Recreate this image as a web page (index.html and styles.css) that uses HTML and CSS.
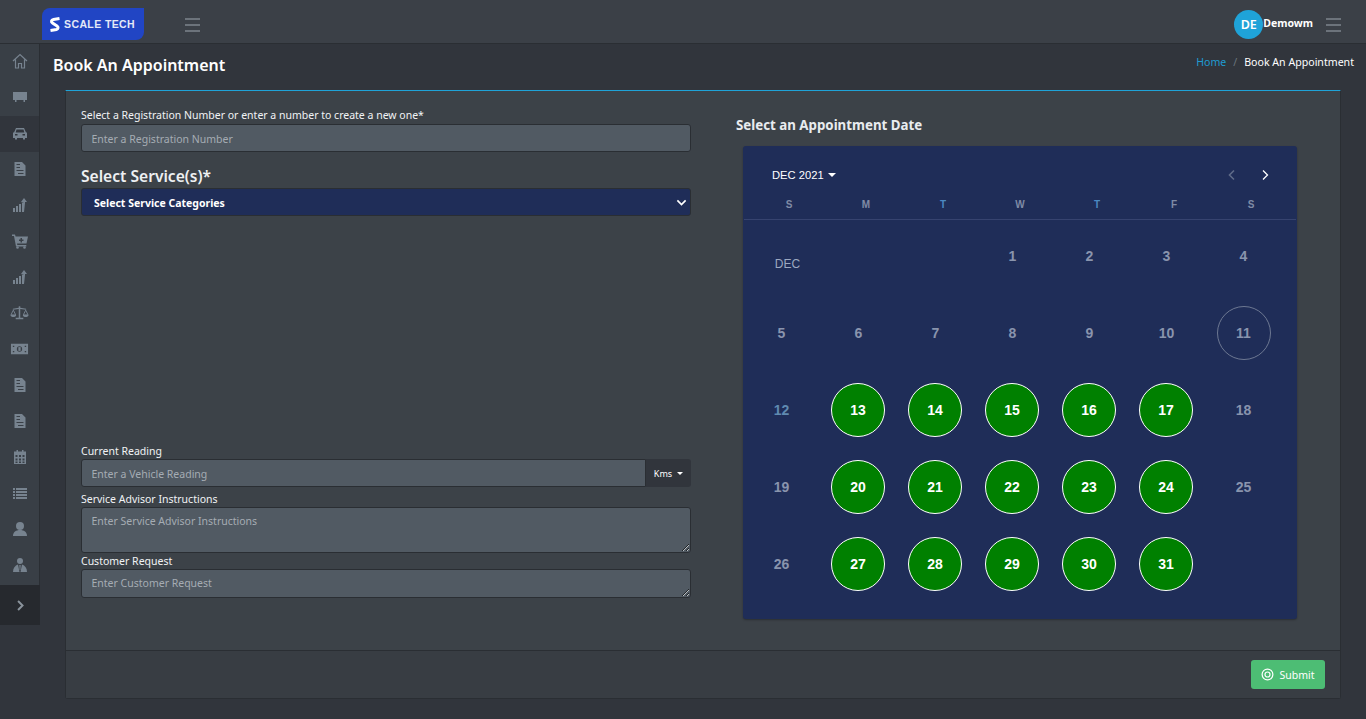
FILE: index.html
```html
<!DOCTYPE html>
<html>
<head>
    <title>Book An Appointment</title>
    <link rel="stylesheet" href="styles.css">
</head>
<body>
    <header class="topbar">
        <div class="logo">
            <svg class="logoMark" viewBox="0 0 12 16" width="12" height="17"><path d="M10.500 2 4.500 3C2 3.500 2 5.500 3.500 6.500L8 9.500C9.500 10.500 9.500 12.500 7.500 13L1.500 14" fill="none" stroke="#fff" stroke-width="3"/></svg>
            <span class="logoText">SCALE TECH</span>
        </div>
        <div class="burger"><span></span><span></span><span></span></div>
        <div class="topRight">
            <div class="avatar">DE</div>
            <span class="userName">Demowm</span>
            <div class="burger"><span></span><span></span><span></span></div>
        </div>
    </header>

    <div class="layout">
        <nav class="sidebar">
            <a class="navItem"><svg viewBox="0 0 16 16"><path d="M1 8 8 1.500 15 8M3.500 6.500V15h3v-4.500h3V15h3V6.500" fill="none" stroke="currentColor" stroke-width="1.200"/></svg></a>
            <a class="navItem"><svg viewBox="0 0 16 16"><path d="M1 3h14v8H1zM3 11h1.500v2H3zM11.500 11H13v2h-1.500z" fill="currentColor"/></svg></a>
            <a class="navItem active"><svg viewBox="0 0 16 16"><path d="M4 3h8l2 4.500h1V13h-2v1.500h-2V13H5v1.500H3V13H1V7.500h1zM4.500 4.500 3.700 7.500h8.600l-.8-3zM3 9v1.500h2.500V9zM10.500 9v1.500H13V9z" fill="currentColor" fill-rule="evenodd"/></svg></a>
            <a class="navItem"><svg viewBox="0 0 16 16"><path d="M2.500 1H10l3.500 3.500V15h-11zM4.500 3v1H8V3zM4.500 6v1H8V6zM4.500 9v1h7V9zM6 12v1h5.500v-1z" fill="currentColor" fill-rule="evenodd"/></svg></a>
            <a class="navItem"><svg viewBox="0 0 16 16"><path d="M1 11h2v4H1zM4 9h2v6H4zM7 7h2v8H7zM10 6h2v9h-2z" fill="currentColor"/><path d="M13 15V5h2L12 1 9 5l3 1z" fill="currentColor"/></svg></a>
            <a class="navItem"><svg viewBox="0 0 16 16"><path d="M0 1.500h3l.6 2H16l-1.500 7H5l.3 1.500h9v1.500H4L2 3H0zM8.500 5v1.500H7V8h1.500v1.500H10V8h1.500V6.500H10V5z" fill="currentColor" fill-rule="evenodd"/><circle cx="5.500" cy="14.500" r="1.300" fill="currentColor"/><circle cx="12.500" cy="14.500" r="1.300" fill="currentColor"/></svg></a>
            <a class="navItem"><svg viewBox="0 0 16 16"><path d="M1 11h2v4H1zM4 9h2v6H4zM7 7h2v8H7zM10 6h2v9h-2z" fill="currentColor"/><path d="M13 15V5h2L12 1 9 5l3 1z" fill="currentColor"/></svg></a>
            <a class="navItem wide"><svg viewBox="0 0 20 16"><path d="M9.200 1h1.600v1.500L17 3.500V4.500l-6.200-.8V13H14v1.500H6V13h3.200V3.700L3 4.500V3.500l6.200-1z" fill="currentColor"/><path d="M3.500 5 1 10h5zM16.500 5 14 10h5z" fill="none" stroke="currentColor"/><path d="M.5 10h6c0 3-6 3-6 0zM13.500 10h6c0 3-6 3-6 0z" fill="currentColor"/></svg></a>
            <a class="navItem wide"><svg viewBox="0 0 20 16"><path d="M1 2.500h18v11H1zM3 4.500v1.500h1.500V4.500zM15.500 4.500V6H17V4.500zM3 10v1.500h1.500V10zM15.500 10v1.500H17V10z" fill="currentColor" fill-rule="evenodd"/><circle cx="10" cy="8" r="2.800" fill="#393f46"/><rect x="8.800" y="6" width="2.400" height="4" fill="currentColor"/></svg></a>
            <a class="navItem"><svg viewBox="0 0 16 16"><path d="M2.500 1H10l3.500 3.500V15h-11zM4.500 3v1H8V3zM4.500 6v1H8V6zM4.500 9v1h7V9zM6 12v1h5.500v-1z" fill="currentColor" fill-rule="evenodd"/></svg></a>
            <a class="navItem"><svg viewBox="0 0 16 16"><path d="M2.500 1H10l3.500 3.500V15h-11zM4.500 3v1H8V3zM4.500 6v1H8V6zM4.500 9v1h7V9zM6 12v1h5.500v-1z" fill="currentColor" fill-rule="evenodd"/></svg></a>
            <a class="navItem"><svg viewBox="0 0 16 16"><path d="M2 2.500h2.500V1h1.500v1.500h4V1h1.500v1.500H14V15H2zM3.500 6v2h2V6zM7 6v2h2V6zM10.500 6v2h2V6zM3.500 9.500v2h2v-2zM7 9.500v2h2v-2zM10.500 9.500v2h2v-2zM3.500 12.500v1.500h2v-1.500zM7 12.500v1.500h2v-1.500zM10.500 12.500v1.500h2v-1.500z" fill="currentColor" fill-rule="evenodd"/></svg></a>
            <a class="navItem"><svg viewBox="0 0 16 16"><path d="M1 3h2v2H1zM4 3h11v2H4zM1 6h2v2H1zM4 6h11v2H4zM1 9h2v2H1zM4 9h11v2H4zM1 12h2v2H1zM4 12h11v2H4z" fill="currentColor"/></svg></a>
            <a class="navItem"><svg viewBox="0 0 16 16"><circle cx="8" cy="5" r="4" fill="currentColor"/><path d="M1 15c0-4 3-6 7-6s7 2 7 6z" fill="currentColor"/></svg></a>
            <a class="navItem"><svg viewBox="0 0 16 16"><circle cx="8" cy="4" r="3" fill="currentColor"/><path d="M1 15c0-4 2-6.500 5-7.500L7.500 15zM15 15c0-4-2-6.500-5-7.500L8.500 15zM7.300 8h1.400L8.400 13h-.8z" fill="currentColor"/></svg></a>
            <a class="navItem toggle"><svg viewBox="0 0 16 16"><path d="M5 2.500 10.500 8 5 13.500" fill="none" stroke="currentColor" stroke-width="2.400"/></svg></a>
        </nav>

        <main class="content">
            <div class="pageHead">
                <h1>Book An Appointment</h1>
                <div class="breadcrumb">
                    <a>Home</a>
                    <span class="sep">/</span>
                    <span>Book An Appointment</span>
                </div>
            </div>

            <section class="card">
                <div class="cardBody">
                    <div class="formCol">
                        <label>Select a Registration Number or enter a number to create a new one*</label>
                        <input type="text" class="field" placeholder="Enter a Registration Number">

                        <h3 class="serviceTitle">Select Service(s)*</h3>
                        <div class="categorySelect">
                            <span>Select Service Categories</span>
                            <svg viewBox="0 0 16 16" width="11" height="11"><path d="M2 5l6 6 6-6" fill="none" stroke="#fff" stroke-width="2.400"/></svg>
                        </div>

                        <div class="lowerFields">
                            <label>Current Reading</label>
                            <div class="inputGroup">
                                <input type="text" class="field" placeholder="Enter a Vehicle Reading">
                                <div class="unit">Kms <i class="caret"></i></div>
                            </div>
                            <label>Service Advisor Instructions</label>
                            <textarea class="field tallArea" placeholder="Enter Service Advisor Instructions"></textarea>
                            <label>Customer Request</label>
                            <textarea class="field shortArea" placeholder="Enter Customer Request"></textarea>
                        </div>
                    </div>

                    <div class="dateCol">
                        <h4>Select an Appointment Date</h4>
                        <div class="calendar">
                            <div class="calHead">
                                <div class="calMonth">DEC 2021 <i class="caret"></i></div>
                                <div class="calArrows">
                                    <svg viewBox="0 0 12 12" width="12" height="12"><path d="M8 1.500 3.500 6 8 10.500" fill="none" stroke="#5f6b88" stroke-width="1.600"/></svg>
                                    <svg viewBox="0 0 12 12" width="12" height="12"><path d="M4 1.500 8.500 6 4 10.500" fill="none" stroke="#fff" stroke-width="1.300"/></svg>
                                </div>
                            </div>
                            <div class="weekdays">
                                <span>S</span><span>M</span><span class="blue">T</span><span>W</span><span class="blue">T</span><span>F</span><span>S</span>
                            </div>
                            <div class="days">
                                <div class="day monthLabel">DEC</div>
                                <div class="day"></div>
                                <div class="day"></div>
                                <div class="day">1</div>
                                <div class="day">2</div>
                                <div class="day">3</div>
                                <div class="day">4</div>

                                <div class="day">5</div>
                                <div class="day">6</div>
                                <div class="day">7</div>
                                <div class="day">8</div>
                                <div class="day">9</div>
                                <div class="day">10</div>
                                <div class="day"><b class="today">11</b></div>

                                <div class="day blueText">12</div>
                                <div class="day"><b class="open">13</b></div>
                                <div class="day"><b class="open">14</b></div>
                                <div class="day"><b class="open">15</b></div>
                                <div class="day"><b class="open">16</b></div>
                                <div class="day"><b class="open">17</b></div>
                                <div class="day">18</div>

                                <div class="day">19</div>
                                <div class="day"><b class="open">20</b></div>
                                <div class="day"><b class="open">21</b></div>
                                <div class="day"><b class="open">22</b></div>
                                <div class="day"><b class="open">23</b></div>
                                <div class="day"><b class="open">24</b></div>
                                <div class="day">25</div>

                                <div class="day">26</div>
                                <div class="day"><b class="open">27</b></div>
                                <div class="day"><b class="open">28</b></div>
                                <div class="day"><b class="open">29</b></div>
                                <div class="day"><b class="open">30</b></div>
                                <div class="day"><b class="open">31</b></div>
                            </div>
                        </div>
                    </div>
                </div>
                <div class="cardFooter">
                    <button class="submitBtn">
                        <svg viewBox="0 0 14 14" width="13" height="13"><circle cx="7" cy="7" r="5.800" fill="none" stroke="#fff" stroke-width="1.300"/><circle cx="7" cy="7" r="2.700" fill="none" stroke="#fff" stroke-width="1.300"/></svg>
                        Submit
                    </button>
                </div>
            </section>
        </main>
    </div>
</body>
</html>
```

FILE: styles.css
```css
* {
    box-sizing: border-box;
}

body {
    font-family: "Noto Sans", "Open Sans", sans-serif;
    background-color: #31353c;
    color: #fff;
    margin: 0;
    height: 719px;
    overflow: hidden;
}

.topbar {
    height: 44px;
    padding-top: 6px;
    display: flex;
    align-items: center;
    background-color: #3b4047;
    border-bottom: 1px solid #2a2e33;
}

.logo {
    width: 102px;
    height: 32px;
    margin-left: 42px;
    margin-bottom: 1px;
    background-color: #2145c4;
    border-radius: 8px 0 8px 0;
    display: flex;
    align-items: center;
    padding-left: 7px;
    gap: 3px;
}

.logoText {
    font-family: "Liberation Sans", sans-serif;
    font-size: 10.500px;
    font-weight: 700;
    letter-spacing: 0.4px;
    color: #e4e9f7;
    white-space: nowrap;
}

.burger {
    width: 15px;
    margin-left: 41px;
    display: flex;
    flex-direction: column;
    gap: 4px;
}

.burger span {
    height: 2px;
    background-color: #6c737b;
}

.topRight {
    margin-left: auto;
    display: flex;
    align-items: center;
    padding-right: 25px;
}

.topRight .burger {
    margin-left: 13px;
}

.avatar {
    width: 29px;
    height: 29px;
    border-radius: 50%;
    background-color: #1fa3d8;
    font-size: 12.500px;
    font-weight: 600;
    display: flex;
    align-items: center;
    justify-content: center;
}

.userName {
    font-size: 10.500px;
    font-weight: 700;
    margin-bottom: 3px;
}

.layout {
    display: flex;
    height: 675px;
}

.sidebar {
    width: 40px;
    height: 581px;
    flex-shrink: 0;
    background-color: #393f46;
    border-right: 1px solid #2a2e33;
    color: #77838f;
}

.navItem {
    height: 36px;
    padding-bottom: 2px;
    display: flex;
    align-items: center;
    justify-content: center;
}

.navItem svg {
    width: 16px;
    height: 16px;
}

.navItem.wide svg {
    width: 19px;
}

.navItem.active {
    background-color: #31353c;
}

.navItem.toggle {
    height: 40px;
    margin-top: 1px;
    margin-right: -1px;
    padding-bottom: 0;
    background-color: #26292e;
    color: #8a939c;
}

.navItem.toggle svg {
    width: 13px;
    height: 13px;
}

.content {
    flex: 1;
    padding: 0 25px 20px 25px;
    display: flex;
    flex-direction: column;
}

.pageHead {
    height: 46px;
    margin-left: -12px;
    margin-right: -13px;
    display: flex;
    justify-content: space-between;
    align-items: flex-start;
    padding-top: 9px;
}

.pageHead h1 {
    font-size: 16px;
    font-weight: 600;
    line-height: 24px;
    margin: 0;
}

.breadcrumb {
    font-size: 10.600px;
    line-height: 18px;
    display: flex;
    gap: 7px;
}

.breadcrumb a {
    color: #1f9bd1;
}

.sep {
    color: #6c757d;
}

.card {
    flex: 1;
    display: flex;
    flex-direction: column;
    background-color: #3c4248;
    border: 1px solid #2a2e33;
    border-top: 1px solid #1fa3d8;
    border-radius: 0 0 3px 3px;
}

.cardBody {
    flex: 1;
    display: flex;
    padding: 16px 15px 0 15px;
}

.formCol {
    width: 610px;
    display: flex;
    flex-direction: column;
}

.formCol label {
    display: block;
    font-size: 10.500px;
    line-height: 16px;
    color: #f1f3f5;
    height: 17px;
}

.formCol .lowerFields label {
    height: 16px;
}

.field {
    display: block;
    width: 100%;
    font-family: "Noto Sans", "Open Sans", sans-serif;
    font-size: 10.500px;
    color: #fff;
    background-color: #515a63;
    border: 1px solid #2a2e33;
    border-radius: 3px;
    padding: 1px 9.500px 0 9.500px;
    height: 28px;
    outline: none;
}

.field::placeholder {
    color: #a5acb3;
    opacity: 1;
}

textarea.field {
    padding-top: 6px;
}

.tallArea {
    height: 46px;
}

.shortArea {
    height: 29px;
}

.serviceTitle {
    font-size: 15.600px;
    font-weight: 600;
    line-height: 22px;
    margin: 13px 0 1px 0;
    color: #eef0f2;
}

.categorySelect {
    height: 28px;
    background-color: #1f2d58;
    border: 1px solid #2a2e33;
    border-radius: 3px;
    padding: 1px 3px 0 12px;
    font-size: 10.500px;
    font-weight: 700;
    display: flex;
    align-items: center;
    justify-content: space-between;
}

.lowerFields {
    margin-top: 227px;
}

.inputGroup {
    display: flex;
    height: 28px;
    margin-bottom: 4px;
}

.inputGroup .field {
    flex: 1;
    border-radius: 3px 0 0 3px;
}

.unit {
    width: 45px;
    background-color: #31353c;
    border-radius: 0 3px 3px 0;
    font-size: 9px;
    display: flex;
    align-items: center;
    justify-content: center;
    gap: 5px;
}

.caret {
    display: inline-block;
    border-top: 3px solid #fff;
    border-left: 3.500px solid transparent;
    border-right: 3.500px solid transparent;
}

.calMonth .caret {
    border-top-width: 4px;
    border-left-width: 4px;
    border-right-width: 4px;
}

.dateCol {
    margin-left: 45px;
    flex: 1;
}

.dateCol h4 {
    font-size: 13.300px;
    font-weight: 700;
    line-height: 18px;
    margin: 9px 0 12px 0;
    color: #e9ecef;
}

.calendar {
    width: 554px;
    height: 473px;
    margin-left: 7px;
    background-color: #1f2d58;
    border-radius: 3px;
    box-shadow: 0 1px 2px rgba(0, 0, 0, 0.3);
    font-family: "Liberation Sans", sans-serif;
}

.calHead {
    height: 50px;
    padding: 7px 26px 0 29px;
    display: flex;
    justify-content: space-between;
    align-items: center;
}

.calMonth {
    font-size: 11.200px;
    display: flex;
    align-items: center;
    gap: 4px;
}

.calArrows {
    display: flex;
    gap: 21px;
}

.weekdays {
    height: 24px;
    display: grid;
    grid-template-columns: repeat(7, 77px);
    padding-left: 6.500px;
    margin: 0 1px;
    border-bottom: 1px solid #36436f;
    font-size: 10px;
    font-weight: 700;
    color: #7f8ba6;
    text-align: center;
    line-height: 18px;
}

.weekdays .blue {
    color: #4c89c2;
}

.days {
    display: grid;
    grid-template-columns: repeat(7, 77px);
    grid-auto-rows: 77px;
    margin-top: -3px;
}

.day {
    display: flex;
    align-items: center;
    justify-content: center;
    font-size: 14px;
    font-weight: 700;
    color: #8994ad;
}

.day.blueText {
    color: #5f8ab0;
}

.day.monthLabel {
    font-size: 12px;
    font-weight: 400;
    color: #9ca8c0;
    padding: 17px 0 0 12px;
}

.day b {
    width: 54px;
    height: 54px;
    border-radius: 50%;
    display: flex;
    align-items: center;
    justify-content: center;
}

.today {
    border: 1px solid #6d7892;
}

.open {
    background-color: #008000;
    border: 1px solid #fff;
    color: #fff;
    margin-right: 1px;
}

.cardFooter {
    height: 48px;
    background-color: #383d43;
    border-top: 1px solid #2a2e33;
    display: flex;
    justify-content: flex-end;
    align-items: center;
    padding-right: 15px;
}

.submitBtn {
    width: 74px;
    height: 29px;
    background-color: #4dbd74;
    border: none;
    border-radius: 3px;
    color: #fff;
    font-family: "Noto Sans", "Open Sans", sans-serif;
    font-size: 10.500px;
    display: flex;
    align-items: center;
    justify-content: center;
    gap: 5px;
    cursor: pointer;
}
```
